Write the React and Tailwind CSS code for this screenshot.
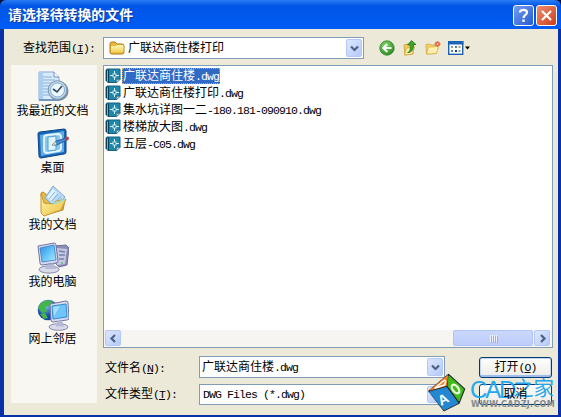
import { Fragment } from "react";

const files = [
  "广联达商住楼.dwg",
  "广联达商住楼打印.dwg",
  "集水坑详图一二-180.181-090910.dwg",
  "楼梯放大图.dwg",
  "五层-C05.dwg",
];

// Latin runs take a half-width cell, Chinese ones a full cell
const Text = ({ children }) =>
  children.split(/([\x20-\x7e]+)/).map((part, i) =>
    i % 2 ? (
      <span
        key={i}
        className="font-['Liberation_Mono',monospace] text-[11.5px] tracking-[-0.9px]"
      >
        {part}
      </span>
    ) : (
      <Fragment key={i}>{part}</Fragment>
    )
  );

const Hotkey = ({ label, letter, colon = ":" }) => (
  <span>
    {label}
    <span className="font-['Liberation_Mono',monospace] text-[11.5px] tracking-[-0.9px]">
      (<span className="underline underline-offset-1">{letter}</span>){colon}
    </span>
  </span>
);

const Chevron = ({ d = "M1 2.5 4.5 6 8 2.5" }) => (
  <svg width="9" height="9" viewBox="0 0 9 9" fill="none">
    <path d={d} stroke="#4d6185" strokeWidth="2.2" />
  </svg>
);

const ArrowButton = ({ d, className = "" }) => (
  <div
    className={`flex items-center justify-center rounded-[2px] border border-[#b5c7f3] bg-linear-to-br from-[#dde7fe] to-[#b5cafa] ${className}`}
  >
    <Chevron d={d} />
  </div>
);

const Combo = ({ children, className = "" }) => (
  <div
    className={`flex items-center border border-[#7f9db9] bg-white p-px ${className}`}
  >
    <div className="flex flex-1 items-center">{children}</div>
    <ArrowButton className="w-4 self-stretch" />
  </div>
);

const Button = ({ children, className = "" }) => (
  <div
    className={`flex h-[21px] w-[73px] items-center justify-center rounded-[3px] border border-[#003c74] bg-linear-to-b from-white to-[#ecebe5] ${className}`}
  >
    {children}
  </div>
);

const DwgIcon = () => (
  <svg width="16" height="16" viewBox="0 0 16 16" className="shrink-0">
    <path d="M2 .5h12.5q1 0 1 1V11l-4 4H3L.5 12.500V2Z" fill="#176582" />
    <path d="M4 1.500h10.500V10.500L11 14H4Z" fill="#1d88ab" />
    <path d="M1.500 2v11M3.500 1.500v13" stroke="#0c3d57" />
    <path d="M2.500 2.500v11" stroke="#6db5cc" />
    <path d="M9.500 3v9M5 7.500h9" stroke="#d9f4fa" />
    <rect x="8" y="6" width="3" height="3" fill="#1d7798" stroke="#e8fbff" strokeWidth=".8" />
    <path d="m11 15 .5-3.500 4-.5Z" fill="#d6e8ef" stroke="#17556f" strokeWidth=".6" />
  </svg>
);

const FolderIcon = () => (
  <svg width="16" height="16" viewBox="0 0 16 16" className="shrink-0">
    <path d="M1 4q0-2 2-2h3l2 2h5q2 0 2 2v6q0 2-2 2H3q-2 0-2-2Z" fill="#e9b93b" stroke="#ae7d17" />
    <path d="M2 7q0-1 1-1h4l1-1h5.500q1 0 1 1v5q0 1.500-1.500 1.500H3.500Q2 13.500 2 12Z" fill="url(#folder)" />
    <defs>
      <linearGradient id="folder" x1="0" y1="0" x2="0" y2="1">
        <stop stopColor="#fff7b4" />
        <stop offset="1" stopColor="#f3cc55" />
      </linearGradient>
    </defs>
  </svg>
);

const BackIcon = () => (
  <svg width="16" height="16" viewBox="0 0 16 16">
    <defs>
      <radialGradient id="back" cx=".4" cy=".3" r=".75">
        <stop stopColor="#83d56c" />
        <stop offset="1" stopColor="#268b1c" />
      </radialGradient>
    </defs>
    <circle cx="8" cy="8" r="7.200" fill="url(#back)" stroke="#348729" strokeWidth=".8" />
    <path d="M12.500 8H5M8.300 4 4.300 8l4 4" fill="none" stroke="white" strokeWidth="2" />
  </svg>
);

const UpIcon = () => (
  <svg width="16" height="16" viewBox="0 0 16 16">
    <path d="m2 5 4-1 1 1 5-1-1 10-8 1Z" fill="#f4d05c" stroke="#c99a2c" strokeWidth=".8" />
    <path d="m2.500 15 2-7 8-1-2 7Z" fill="#fff1a0" stroke="#d3a538" strokeWidth=".8" />
    <path d="M5.500 12.500C8 12 8.500 9 8.200 5H5.500l4-4.500L14 4.500h-2.600c.3 4-1 8.500-5.900 8Z" fill="#3da52e" stroke="#1d6f1b" strokeWidth=".7" />
  </svg>
);

const NewFolderIcon = () => (
  <svg width="16" height="16" viewBox="0 0 16 16">
    <path d="M1 4.500 5 4l1 1h5v8.500L1.500 14Z" fill="#f8d566" stroke="#d2a140" strokeWidth=".8" />
    <path d="m1.500 14 2-7 10-.5-2 7Z" fill="#fff0ae" stroke="#d8ac4b" strokeWidth=".8" />
    <path d="M12.500 1v6M9.500 4h6M10.500 2l4 4M14.500 2l-4 4" stroke="#ed7942" strokeWidth="1.300" />
    <circle cx="12.500" cy="4" r="1.500" fill="#fff3d7" stroke="#d84a25" />
  </svg>
);

const ViewIcon = () => (
  <svg width="23" height="16" viewBox="0 0 23 16">
    <rect x=".7" y="1.700" width="14" height="12.600" fill="#fffef5" stroke="#1c62b0" strokeWidth="1.400" />
    <path d="M0 1h15.400v3.500H0Z" fill="#1b64b9" />
    <path d="M3 6h2v2H3zM10.500 10h2v2h-2z" fill="#7aa69c" />
    <path d="M7 6h2v2H7zM3 10h2v2H3z" fill="#5c7ab8" />
    <path d="M10.500 6h2v2h-2z" fill="#b5a158" />
    <path d="M7 10h2v2H7z" fill="#17379a" />
    <path d="M17 6.500h5L19.500 9.500Z" fill="black" />
  </svg>
);

const RecentIcon = () => (
  <svg width="32" height="32" viewBox="0 0 32 32">
    <path d="M2 1h15l5 5v23H2Z" fill="#d9eafa" stroke="#8ba9d1" />
    <path d="M2 1h4v28H2Z" fill="#a9cdf0" />
    <path d="M17 1v5h5" fill="#fff" stroke="#658ebd" />
    <path d="M6 6h9M6 9h12M6 12h9M6 15h6M6 18h5M6 21h5M6 24h6" stroke="#86afe0" />
    <path d="M2 29h20" stroke="#5b83b6" strokeWidth="1.500" />
    <circle cx="21.500" cy="20" r="10" fill="#778ea6" />
    <circle cx="20.500" cy="19" r="9.300" fill="#c1d7e7" stroke="#7d96ad" />
    <circle cx="20.500" cy="19" r="7" fill="#edf8fd" stroke="#7eb0d0" />
    <path d="m16 18 4 3 5-6" fill="none" stroke="#34475e" strokeWidth="1.600" />
  </svg>
);

const DesktopIcon = () => (
  <svg width="32" height="32" viewBox="0 0 32 32">
    <path d="M1 6q0-2 2-2l24-3q2 0 2 2v21q0 2-2 2L4 30q-2 0-2-2Z" fill="#1767b6" stroke="#0c458a" />
    <path d="m3 7 24-4v21L4 28Z" fill="#62abe6" />
    <path d="M7 10q0-3 3-3l11-1q3 0 3 3v11q0 3-3 3l-11 2q-3 0-3-3Z" fill="#8cc7f0" stroke="#e6f5fd" strokeWidth="1.800" />
    <path d="m11 9 8-1v14l-8 1Z" fill="#dff4fd" stroke="#4f9fda" />
    <path d="m15 17 4-4 10-3 1 2-10 5Z" fill="#448cca" stroke="#1f5790" strokeWidth=".8" />
    <circle cx="30" cy="10.500" r="1.900" fill="#b84350" />
    <path d="m15 17 3.500-3.500 1 3Z" fill="#f4d6a2" />
  </svg>
);

const DocumentsIcon = () => (
  <svg width="32" height="32" viewBox="0 0 32 32">
    <path d="M4 9q0-2 2-2l5 4 17 4-2 10-18 5Z" fill="#e8bb45" stroke="#b7892a" />
    <path d="M8 13 16 1l12 11-10 10Z" fill="#b9dbf5" stroke="#7ba6cf" />
    <path d="m10 12 6-8 4 4-6 8Z" fill="#e2f2fd" />
    <path d="m12 14 6-7M15 16l6-7M18 18l6-7" stroke="#81b3dd" />
    <path d="m4 9 3 9 9 1 3-3 10-2-5 11-17 6-3-3Z" fill="url(#docs)" stroke="#c59834" />
    <path d="m15 18 5 0 8-4" fill="none" stroke="#97dadc" strokeWidth="1.500" />
    <defs>
      <linearGradient id="docs" x1="0" y1="0" x2="1" y2="1">
        <stop stopColor="#fff8a6" />
        <stop offset="1" stopColor="#edbd42" />
      </linearGradient>
    </defs>
  </svg>
);

const ComputerIcon = () => (
  <svg width="32" height="32" viewBox="0 0 32 32">
    <path d="m18 4 11-1 3 3-2 17-8 2-5-5Z" fill="#8b8db7" stroke="#6e709b" />
    <path d="m20 6 10 1-2 15-8 1Z" fill="#c4c8e1" />
    <path d="m22 9 6 1M22 13l6 0M22 17h5" stroke="#7981ae" strokeWidth="1.500" />
    <circle cx="25" cy="21" r="1" fill="#5fbd75" />
    <path d="m1 4 16-3q2 0 2 2l2 16q0 2-2 2L5 23q-2 0-2-2Z" fill="#d8dbed" stroke="#7276a3" />
    <path d="m3 6 14-3 2 15L5 20Z" fill="url(#screen)" stroke="#3d7cbe" strokeWidth=".8" />
    <path d="m11 22 5-1 1 5-5 1Z" fill="#9ba0c6" />
    <ellipse cx="12" cy="27.500" rx="10" ry="3.600" fill="#d8dbea" stroke="#8888ac" />
    <path d="m10 23 7-1 2 5H8Z" fill="#b5b9d5" />
    <defs>
      <linearGradient id="screen" x1="0" y1="0" x2="1" y2="1">
        <stop stopColor="#288de0" />
        <stop offset=".55" stopColor="#6ac7fa" />
        <stop offset="1" stopColor="#b0eaff" />
      </linearGradient>
    </defs>
  </svg>
);

const NetworkIcon = () => (
  <svg width="32" height="32" viewBox="0 0 32 32">
    <circle cx="11" cy="11" r="10.300" fill="url(#globe)" />
    <path d="m4 4 6-3 6 2-4 4-4 1 2 5-5 1-4-5ZM3 15l5-1 3 5-4 1Z" fill="#45b548" />
    <path d="m13 5 16-3q2 0 2 2l1 15q0 2-2 2l-14 2q-2 0-2-2Z" fill="#d8dbed" stroke="#7276a3" />
    <path d="m15 7 14-2 1 13-14 2Z" fill="#6fc5f8" stroke="#3589d1" />
    <path d="m16 8 7-1-6 10Z" fill="#a5e0fc" />
    <ellipse cx="21.500" cy="28" rx="9.500" ry="3.300" fill="#d8dbea" stroke="#8888ac" />
    <path d="m20 22.500 5-1 2 6h-8Z" fill="#b5b9d5" />
    <defs>
      <radialGradient id="globe" cx=".4" cy=".3">
        <stop stopColor="#79c7e9" />
        <stop offset="1" stopColor="#1648aa" />
      </radialGradient>
    </defs>
  </svg>
);

const places = [
  { name: "我最近的文档", Icon: RecentIcon },
  { name: "桌面", Icon: DesktopIcon },
  { name: "我的文档", Icon: DocumentsIcon },
  { name: "我的电脑", Icon: ComputerIcon },
  { name: "网上邻居", Icon: NetworkIcon },
];

const Watermark = () => (
  <div className="absolute top-[373px] left-[427px] flex">
    <svg width="39" height="39" viewBox="0 0 39 39" strokeLinejoin="round">
      <path d="M2 18 21.500 1.500 37.500 16 32 30 17 37.500Z" fill="#232b2c" stroke="#232b2c" strokeWidth="1.500" />
      <path d="M3 17 20.500 2.500 19.500 12.500Z" fill="#f47a22" stroke="#f47a22" />
      <path d="m22 3 14.500 13L32 28 21 13Z" fill="#42b91d" stroke="#42b91d" />
      <path d="m2.500 19 17-4.500L31 30l-14 7Z" fill="#2388d1" stroke="#2388d1" />
      <path d="m8 15 9-7.500q2-.5 1.500 1.500l-1 3Z" fill="none" stroke="white" strokeWidth="1.600" />
      <text transform="translate(14 33) rotate(-28)" fill="white" fontFamily="Liberation Sans, sans-serif" fontWeight="bold" fontSize="14">
        A
      </text>
      <ellipse cx="28.500" cy="16" rx="2.800" ry="5" transform="rotate(-38 28.500 16)" fill="none" stroke="#e8ffd9" strokeWidth="2.200" />
    </svg>
    <div className="ml-[4px] whitespace-nowrap">
      <div className="flex h-[27px] items-center pt-[5px] text-[#22a8ef]">
        <span className="w-[43px] font-['Liberation_Sans',sans-serif] text-[24px] tracking-[-2.200px]">
          CAD
        </span>
        <span className="text-[20.500px] leading-[22px]">之家</span>
      </div>
      <div className="pl-px font-['DejaVu_Sans',sans-serif] text-[8px] leading-[9px] font-bold tracking-[0.3px] text-[#85898d]">
        WWW.CADZJ.COM
      </div>
    </div>
  </div>
);

const App = () => {
  return (
    <div className="relative flex h-[417px] w-[561px] flex-col overflow-hidden bg-[#0831a8] font-['Liberation_Sans','Noto_Sans_CJK_SC',sans-serif] text-[12px] leading-[17px] text-black">
      <div className="shrink-0 bg-[#02103f]">
        <div className="flex h-[29px] items-center rounded-t-[6px] bg-linear-to-b from-[#2a7df2] via-[#0055e6] via-20% to-[#005cf6] pr-[4px] pl-[8px]">
          <h1 className="flex-1 pt-[2px] text-[13.900px] font-bold text-white [text-shadow:1px_1px_#123c92]">
            请选择待转换的文件
          </h1>
          <div className="mt-[2px] flex gap-[2px]">
            <div className="flex size-[21px] items-center justify-center rounded-[3px] border border-white bg-linear-to-br from-[#769cf0] to-[#2359d2]">
              <svg width="13" height="15" viewBox="0 0 13 15" fill="none">
                <path d="M3 4.500C3 1 10 1 10 4.500c0 2.300-3.500 2.500-3.500 5.500" stroke="white" strokeWidth="2.200" />
                <path d="M5.300 11.500h2.400v2.400H5.300z" fill="white" />
              </svg>
            </div>
            <div className="flex size-[21px] items-center justify-center rounded-[3px] border border-white bg-linear-to-br from-[#ee8c6d] to-[#cc3c13]">
              <svg width="13" height="13" viewBox="0 0 13 13">
                <path d="m2 2 9 9M11 2l-9 9" stroke="white" strokeWidth="2.200" />
              </svg>
            </div>
          </div>
        </div>
      </div>

      <div className="mr-[3px] ml-[4px] flex h-[386px] flex-col bg-[#ece9d8]">
        <div className="flex h-[36px] items-center pt-[2px]">
          <div className="w-[95px] pl-[19px]">
            <Hotkey label="查找范围" letter="I" />
          </div>
          <Combo className="ml-[4px] h-[22px] w-[261px]">
            <span className="mr-[3px] ml-[4px]">
              <FolderIcon />
            </span>
            广联达商住楼打印
          </Combo>
          <div className="ml-[15px] flex gap-[7px]">
            <BackIcon />
            <UpIcon />
            <NewFolderIcon />
            <ViewIcon />
          </div>
        </div>

        <div className="flex flex-1">
          <div className="ml-[7px] h-[338px] w-[86px] bg-[#f8f7f2] pt-[6px]">
            {places.map(({ name, Icon }) => (
              <div key={name} className="flex h-[57px] flex-col items-center pr-[3px]">
                <Icon />
                <span>{name}</span>
              </div>
            ))}
          </div>

          <div className="ml-[6px] w-[450px]">
            <div className="flex h-[283px] flex-col border border-[#7f9db9] bg-white">
              <ul className="flex-1 pt-px pl-px">
                {files.map((file, i) => (
                  <li key={file} className="flex h-[17px] items-center">
                    <DwgIcon />
                    <span
                      className={`ml-px h-[16px] px-px leading-[16px] whitespace-nowrap ${i === 0 ? "bg-[#316ac5] text-white outline outline-dotted outline-[#d8a04a] -outline-offset-1" : ""}`}
                    >
                      <Text>{file}</Text>
                    </span>
                  </li>
                ))}
              </ul>
              <div className="flex h-[17px] items-stretch bg-[#f6f5f1] pr-[2px] pb-px pl-px">
                <ArrowButton d="M6 1 2.500 4.500 6 8" className="w-[16px]" />
                <div className="ml-auto flex w-[80px] items-center justify-center gap-px rounded-[2px] border border-[#afc3f4] bg-linear-to-b from-[#cad8fd] to-[#bccdfa]">
                  {[0, 1, 2, 3].map((n) => (
                    <div key={n} className="h-[7px] w-px bg-[#eef4fe] shadow-[1px_1px_#8cb0f8]"></div>
                  ))}
                </div>
                <ArrowButton d="M3 1 6.500 4.500 3 8" className="ml-px w-[16px]" />
              </div>
            </div>

            <div className="mt-[8px] flex h-[22px] items-center">
              <div className="w-[96px] pt-[2px] pl-[2px]">
                <Hotkey label="文件名" letter="N" />
              </div>
              <Combo className="h-[22px] w-[246px]">
                <span className="ml-px">
                  <Text>广联达商住楼.dwg</Text>
                </span>
              </Combo>
              <Button className="mr-px ml-auto shadow-[inset_0_-2px_0_#9ebcec,inset_0_0_0_1px_#c3d6f5]">
                <Hotkey label="打开" letter="O" colon="" />
              </Button>
            </div>
            <div className="mt-[6px] flex h-[21px] items-center">
              <div className="w-[96px] pl-[2px]">
                <Hotkey label="文件类型" letter="T" />
              </div>
              <Combo className="h-[21px] w-[246px]">
                <span className="ml-[2px]">
                  <Text>DWG Files (*.dwg)</Text>
                </span>
              </Combo>
              <Button className="mr-px ml-auto">
                <span className="relative z-10">取消</span>
              </Button>
            </div>
          </div>
        </div>
      </div>

      <Watermark />
    </div>
  );
};

export default App;
